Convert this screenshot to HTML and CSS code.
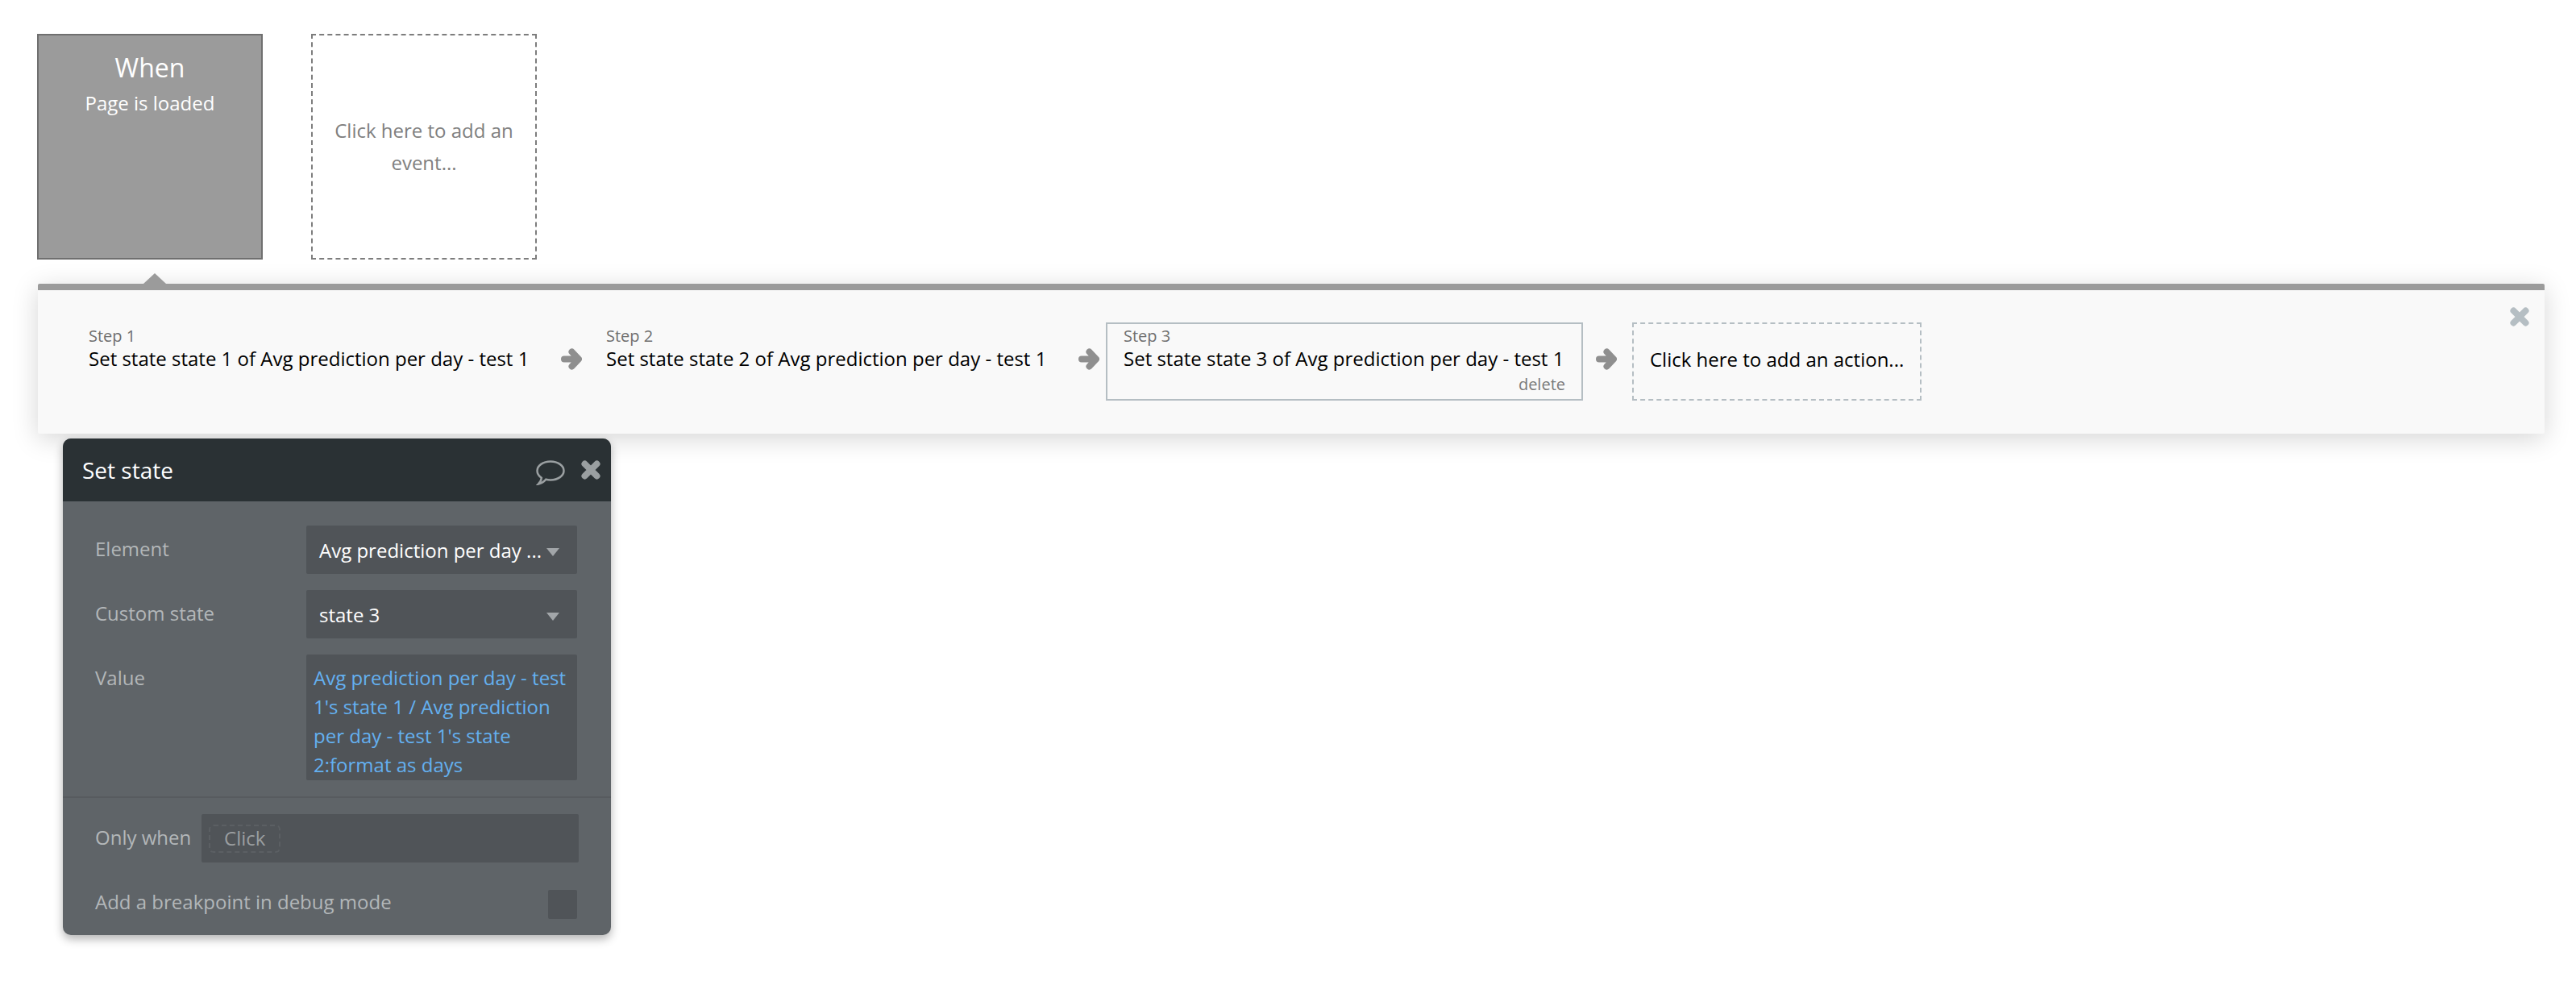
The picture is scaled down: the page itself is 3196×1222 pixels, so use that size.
FILE: index.html
```html
<!DOCTYPE html>
<html lang="en">
<head>
  <meta charset="UTF-8" />
  <title>Workflow editor</title>
  <link rel="stylesheet" href="styles.css">
</head>
<body>
  <!-- event cards -->
  <div class="events">
    <div class="event-card active">
      <div class="event-when">When</div>
      <div class="event-name">Page is loaded</div>
    </div>
    <div class="event-card add">Click here to add an event...</div>
  </div>

  <!-- action strip -->
  <div class="strip">
    <span class="strip-pointer"></span>
    <div class="step">
      <div class="step-num">Step 1</div>
      <div class="step-title">Set state state 1 of Avg prediction per day - test 1</div>
    </div>
    <svg class="arrow" viewBox="0 0 26 27"><path d="M4 13.5H20M13.5 4.5L22 13.5L13.5 22.5" /></svg>
    <div class="step">
      <div class="step-num">Step 2</div>
      <div class="step-title">Set state state 2 of Avg prediction per day - test 1</div>
    </div>
    <svg class="arrow" viewBox="0 0 26 27"><path d="M4 13.5H20M13.5 4.5L22 13.5L13.5 22.5" /></svg>
    <div class="step selected">
      <div class="step-num">Step 3</div>
      <div class="step-title">Set state state 3 of Avg prediction per day - test 1</div>
      <div class="step-delete">delete</div>
    </div>
    <svg class="arrow last" viewBox="0 0 26 27"><path d="M4 13.5H20M13.5 4.5L22 13.5L13.5 22.5" /></svg>
    <div class="step-add">Click here to add an action...</div>
    <svg class="close strip-close" viewBox="0 0 24 24"><path d="M4.5 4.5L19.5 19.5M19.5 4.5L4.5 19.5" /></svg>
  </div>

  <!-- property editor -->
  <div class="editor">
    <div class="editor-head">
      <span class="editor-title">Set state</span>
      <svg class="bubble" viewBox="0 0 36 31"><path d="M18 1.5C27.2 1.5 34.5 6.6 34.5 13C34.5 19.4 27.2 24.5 18 24.5C16 24.5 14 24.3 12.3 23.8C10.5 26 7.5 28.5 3 29.5C5 27.5 6.5 25 6.8 21.8C3.5 19.6 1.5 16.5 1.5 13C1.5 6.6 8.8 1.5 18 1.5Z" /></svg>
      <svg class="close head-close" viewBox="0 0 24 24"><path d="M4.5 4.5L19.5 19.5M19.5 4.5L4.5 19.5" /></svg>
    </div>
    <div class="editor-body">
      <div class="row">
        <label class="row-label">Element</label>
        <div class="dropdown">Avg prediction per day ...</div>
      </div>
      <div class="row">
        <label class="row-label">Custom state</label>
        <div class="dropdown">state 3</div>
      </div>
      <div class="row">
        <label class="row-label">Value</label>
        <div class="expression">Avg prediction per day - test 1's state 1 / Avg prediction per day - test 1's state 2:format as days</div>
      </div>
    </div>
    <div class="editor-foot">
      <div class="only-when">
        <label class="row-label">Only when</label>
        <div class="condition"><span class="click-pill">Click</span></div>
      </div>
      <div class="breakpoint">
        <label class="row-label">Add a breakpoint in debug mode</label>
        <span class="checkbox"></span>
      </div>
    </div>
  </div>
</body>
</html>
```

FILE: styles.css
```css
:root {
  --card-grey: #9b9b9b;
  --panel-bg: #f9f9f9;
  --steel: #b5bec3;
  --editor-dark: #2a3134;
  --editor-bg: #5f6468;
  --field-bg: #505458;
  --label: #b3b7b9;
}

html, body {
  margin: 0;
  background: #fff;
}
body {
  font-family: 'Open Sans', sans-serif;
  height: 1222px;
  overflow: hidden;
}

.events {
  display: flex;
  gap: 60px;
  padding: 42px 0 0 46px;
}
.event-card {
  width: 280px;
  height: 280px;
  box-sizing: border-box;
  text-align: center;
}
.event-card.active {
  background: var(--card-grey);
  border: 2px solid #6f6f6f;
  color: #fff;
  padding-top: 18px;
}
.event-when {
  font-size: 32px;
  line-height: 44px;
}
.event-name {
  font-size: 24px;
  line-height: 44px;
}
.event-card.add {
  border: 2px dashed #7d7d7d;
  color: #808080;
  font-size: 24px;
  line-height: 40px;
  padding: 98px 24px 0;
}

.strip {
  position: relative;
  display: flex;
  align-items: flex-start;
  box-sizing: border-box;
  height: 186px;
  width: 3110px;
  margin: 30px 0 0 47px;
  padding: 40px 0 0 41px;
  background: var(--panel-bg);
  border-top: 8px solid var(--card-grey);
  border-radius: 2px;
  box-shadow: 0 6px 32px rgba(0, 0, 0, 0.17);
}
.strip-pointer {
  position: absolute;
  left: 131px;
  top: -21px;
  width: 0;
  height: 0;
  border-left: 14px solid transparent;
  border-right: 14px solid transparent;
  border-bottom: 13px solid var(--card-grey);
}
.step {
  width: 592px;
  height: 97px;
  box-sizing: border-box;
  padding: 4px 20px 0 20px;
  border: 2px solid transparent;
  color: #000;
}
.step.selected {
  border-color: var(--steel);
}
.step-num {
  font-size: 20px;
  line-height: 21px;
  color: #6f6f6f;
}
.step-title {
  font-size: 24px;
  line-height: 36px;
  white-space: nowrap;
}
.step-delete {
  font-size: 20px;
  line-height: 26px;
  margin-top: 1px;
  text-align: right;
  color: #7a7a7a;
}
.arrow {
  flex: none;
  width: 26px;
  height: 27px;
  margin: 32px 8px 0 16px;
  fill: none;
  stroke: #8f8f8f;
  stroke-width: 8;
  stroke-linecap: round;
  stroke-linejoin: round;
}
.arrow.last {
  margin-right: 19px;
}
.step-add {
  width: 359px;
  height: 97px;
  box-sizing: border-box;
  border: 2px dashed var(--steel);
  font-size: 24px;
  line-height: 87px;
  padding-left: 20px;
  color: #000;
  white-space: nowrap;
}
.close {
  width: 24px;
  height: 24px;
  fill: none;
  stroke-width: 8;
  stroke-linecap: round;
}
.strip-close {
  position: absolute;
  right: 19px;
  top: 21px;
  stroke: var(--steel);
}

.editor {
  width: 680px;
  margin: 6px 0 0 78px;
  position: relative;
  background: var(--editor-bg);
  border-radius: 10px;
  box-shadow: 0 5px 12px rgba(0, 0, 0, 0.3);
  overflow: hidden;
}
.editor-head {
  display: flex;
  align-items: center;
  height: 78px;
  padding: 0 13px 0 24px;
  background: var(--editor-dark);
}
.editor-title {
  flex: 1;
  font-size: 28px;
  color: #fff;
}
.bubble {
  width: 36px;
  height: 31px;
  margin: 6px 20px 0 0;
  fill: none;
  stroke: #9a9fa1;
  stroke-width: 2.5;
}
.head-close {
  stroke: #9a9fa1;
}
.editor-body {
  display: flex;
  flex-direction: column;
  gap: 20px;
  padding: 30px 42px 20px 40px;
  border-bottom: 2px solid #575b5f;
}
.row {
  display: flex;
  align-items: flex-start;
}
.row-label {
  font-size: 24px;
  line-height: 36px;
  color: var(--label);
  white-space: nowrap;
}
.row .row-label {
  flex: none;
  width: 262px;
  padding-top: 11px;
}
.dropdown {
  position: relative;
  width: 336px;
  height: 60px;
  box-sizing: border-box;
  padding-left: 16px;
  background: var(--field-bg);
  border-radius: 2px;
  font-size: 24px;
  line-height: 62px;
  color: #fff;
  white-space: nowrap;
}
.dropdown::after {
  content: "";
  position: absolute;
  right: 22px;
  top: 28px;
  border-left: 8px solid transparent;
  border-right: 8px solid transparent;
  border-top: 10px solid #a2a6a9;
}
.expression {
  width: 336px;
  height: 156px;
  box-sizing: border-box;
  padding: 11px 8px 0 9px;
  background: var(--field-bg);
  border-radius: 2px;
  font-size: 24px;
  line-height: 36px;
  color: #64b0f0;
}
.editor-foot {
  padding: 20px 40px 20px 40px;
}
.only-when {
  display: flex;
  align-items: center;
  gap: 13px;
}
.only-when .row-label {
  padding-bottom: 3px;
}
.condition {
  display: flex;
  align-items: center;
  flex: 1;
  height: 60px;
  box-sizing: border-box;
  padding-left: 9px;
  background: var(--field-bg);
  border-radius: 2px;
}
.click-pill {
  width: 89px;
  height: 35px;
  box-sizing: border-box;
  border: 2px dashed #5b5f63;
  border-radius: 6px;
  font-size: 24px;
  line-height: 29px;
  text-align: center;
  color: #9a9ea0;
}
.breakpoint {
  display: flex;
  align-items: flex-start;
  justify-content: space-between;
  margin: 34px 2px 0 0;
}
.breakpoint .row-label {
  line-height: 30px;
}
.checkbox {
  width: 36px;
  height: 36px;
  background: var(--field-bg);
  border-radius: 2px;
}
```
